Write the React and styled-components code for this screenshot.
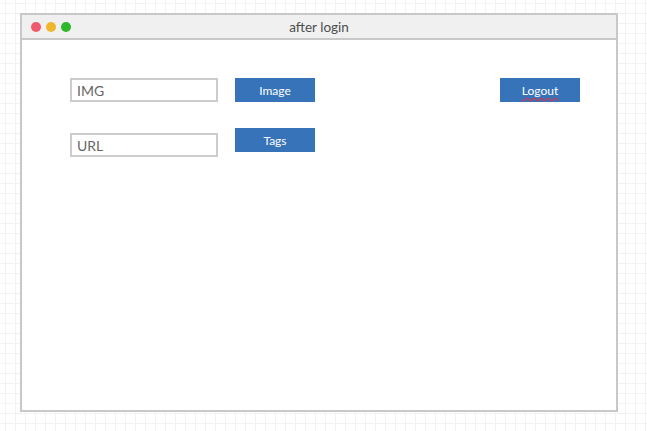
import React from "react";
import styled, { createGlobalStyle } from "styled-components";

const Global = createGlobalStyle`
  html, body { margin: 0; padding: 0; }
  body {
    width: 647px;
    height: 431px;
    overflow: hidden;
    font-family: Lato, "Open Sans", sans-serif;
    background-color: #ffffff;
    background-image:
      linear-gradient(to right, #f2f2f2 1px, transparent 1px),
      linear-gradient(to bottom, #f2f2f2 1px, transparent 1px);
    background-size: 10px 10px;
    background-position: 5px 3px;
  }
`;

const Page = styled.div`
  padding: 13px 0 0 20px;
`;

const Window = styled.div`
  width: 594px;
  height: 395px;
  border: 2px solid #c8c8c8;
  background: #ffffff;
  display: flex;
  flex-direction: column;
`;

const TitleBar = styled.div`
  height: 23px;
  background: #f0f0f0;
  border-bottom: 2px solid #c8c8c8;
  display: flex;
  align-items: center;
  position: relative;
  padding-left: 9px;
`;

const Dots = styled.div`
  display: flex;
  gap: 5px;
`;

const Dot = styled.span`
  width: 10px;
  height: 10px;
  border-radius: 50%;
  background: ${(p) => p.$color};
`;

const Title = styled.div`
  position: absolute;
  left: 0;
  right: 0;
  top: 0;
  bottom: 0;
  display: flex;
  align-items: center;
  justify-content: center;
  font-size: 13.5px;
  color: #4d4d4d;
  pointer-events: none;
`;

const Body = styled.div`
  flex: 1;
  display: flex;
  padding: 38px 36px 0 48px;
`;

const Form = styled.div`
  display: grid;
  grid-template-columns: 148px 80px;
  column-gap: 17px;
  row-gap: 26px;
  align-content: start;
`;

const Field = styled.div`
  box-sizing: border-box;
  height: 24px;
  border: 2px solid #cccccc;
  display: flex;
  align-items: center;
  padding-left: 5px;
  font-size: 14px;
  color: #666666;
  margin-top: ${(p) => p.$offset || 0}px;
`;

const Button = styled.div`
  box-sizing: border-box;
  height: 24px;
  width: 80px;
  background: #3673b9;
  color: #ffffff;
  font-size: 12px;
  display: flex;
  align-items: center;
  justify-content: center;
  padding-top: 1px;
`;

const Spacer = styled.div`
  flex: 1;
`;

const Misspelled = styled.span`
  display: inline-block;
  text-decoration-line: underline;
  text-decoration-style: wavy;
  text-decoration-color: #d8344a;
  text-decoration-skip-ink: none;
  text-underline-offset: 2px;
`;

export default function App() {
  return (
    <>
      <Global />
      <Page>
        <Window>
          <TitleBar>
            <Dots>
              <Dot $color="#ee5a6b" />
              <Dot $color="#f0b72c" />
              <Dot $color="#2db92b" />
            </Dots>
            <Title>after login</Title>
          </TitleBar>
          <Body>
            <Form>
              <Field>IMG</Field>
              <Button>Image</Button>
              <Field $offset={5}>URL</Field>
              <Button>Tags</Button>
            </Form>
            <Spacer />
            <Button>
              <Misspelled>Logout</Misspelled>
            </Button>
          </Body>
        </Window>
      </Page>
    </>
  );
}
